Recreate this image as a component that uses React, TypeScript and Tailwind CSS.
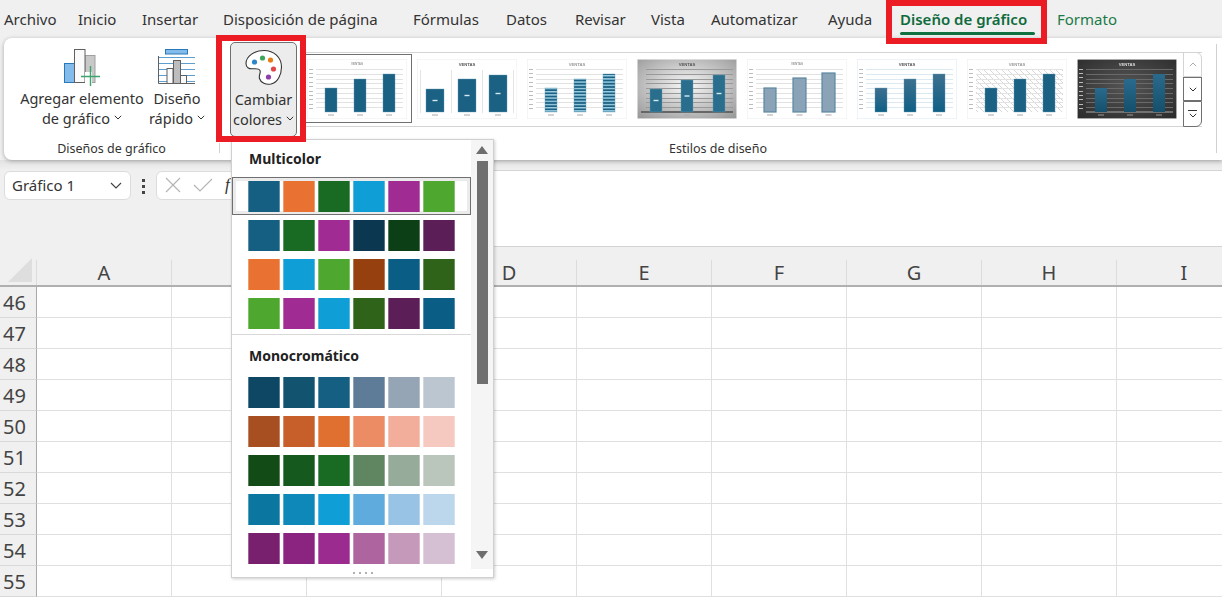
import React from "react";

const tabs: { label: string; cls: string }[] = [
  { label: "Archivo", cls: "w-[74px] text-[#333]" },
  { label: "Inicio", cls: "w-[64px] text-[#333]" },
  { label: "Insertar", cls: "w-[81px] text-[#333]" },
  { label: "Disposición de página", cls: "w-[190px] text-[#333]" },
  { label: "Fórmulas", cls: "w-[93px] text-[#333]" },
  { label: "Datos", cls: "w-[69px] text-[#333]" },
  { label: "Revisar", cls: "w-[76px] text-[#333]" },
  { label: "Vista", cls: "w-[60px] text-[#333]" },
  { label: "Automatizar", cls: "w-[117px] text-[#333]" },
  { label: "Ayuda", cls: "w-[72px] text-[#333]" },
  { label: "Diseño de gráfico", cls: "w-[157px] text-[#0f6b3c] font-semibold" },
  { label: "Formato", cls: "w-[100px] text-[#1c7a48]" },
];

const selectedRow = ["#156082", "#e97132", "#196b24", "#0f9ed5", "#a02b93", "#4ea72e"];
const multi = [
  ["#156082", "#196b24", "#a02b93", "#0c3750", "#0d3f16", "#5c1e57"],
  ["#e97132", "#0f9ed5", "#4ea72e", "#97400f", "#0a5e85", "#2f6319"],
  ["#4ea72e", "#a02b93", "#0f9ed5", "#2f6319", "#5c1e57", "#0a5e85"],
];
const mono = [
  ["#0d4763", "#125470", "#156082", "#5e7b97", "#96a5b5", "#bcc6d0"],
  ["#a84f21", "#c65f2a", "#e0702f", "#ec8c64", "#f2ae9b", "#f5c9c0"],
  ["#124b16", "#16591e", "#196b24", "#5f8661", "#97ab9a", "#bac6bb"],
  ["#0b76a0", "#0d88b9", "#0f9ed5", "#5fabdd", "#98c3e4", "#bcd6ec"],
  ["#781f6e", "#8b2480", "#9c2b8f", "#ae649f", "#c499ba", "#d5bfd3"],
];

const cols = ["A", "B", "C", "D", "E", "F", "G", "H", "I"];
const rows = [46, 47, 48, 49, 50, 51, 52, 53, 54, 55];

function Swatches({ colors }: { colors: string[] }) {
  return (
    <div className="flex gap-[3px]">
      {colors.map((c, i) => (
        <div key={i} className="w-[32px] h-[31px] border-x border-white/30" style={{ backgroundColor: c }} />
      ))}
    </div>
  );
}

function Chevron({ className = "" }: { className?: string }) {
  return (
    <svg viewBox="0 0 8 5" className={"w-[8px] h-[5px] " + className} fill="none" stroke="#333" strokeWidth="1">
      <path d="M0.8 0.8 L4 4 L7.2 0.8" />
    </svg>
  );
}

type Variant = "plain" | "wide" | "stripe" | "silver" | "soft" | "blue" | "hatch" | "dark";

function Thumb({ v }: { v: Variant }) {
  const wide = v === "wide" || v === "silver";
  const bars: [number, number, number][] =
    v === "wide"
      ? [[9, 18, 30], [41, 18, 20], [72, 18, 16]]
      : v === "silver"
      ? [[13, 12, 30], [44, 12, 21], [76, 12, 16]]
      : v === "soft"
      ? [[17, 12, 29], [46, 13, 19], [75, 13, 14]]
      : [[18, 12, 29], [47, 12, 20], [76, 12, 15]];
  const gridColor =
    v === "dark" ? "#6a6a6a" : v === "silver" ? "#999" : v === "blue" ? "#c3dbe9" : "#e2e2e2";
  const bg = v === "dark" ? "url(#g-dark)" : v === "silver" ? "url(#g-silver)" : "#fff";
  const fill =
    v === "blue"
      ? "url(#g-bar)"
      : v === "dark"
      ? "url(#g-darkbar)"
      : v === "soft"
      ? "#8ba3b6"
      : v === "silver"
      ? "#2a6e8e"
      : v === "stripe"
      ? "url(#p-stripe)"
      : "#1a6184";
  const titleColor = v === "dark" ? "#ddd" : v === "plain" || v === "soft" || v === "hatch" || v === "stripe" ? "#999" : "#555";
  return (
    <svg viewBox="0 0 100 60" className="w-[100px] h-[60px] block">
      <defs>
        <radialGradient id="g-silver" cx="50%" cy="45%" r="70%">
          <stop offset="0%" stopColor="#f8f8f8" />
          <stop offset="100%" stopColor="#9a9a9a" />
        </radialGradient>
        <radialGradient id="g-dark" cx="50%" cy="45%" r="75%">
          <stop offset="0%" stopColor="#555" />
          <stop offset="100%" stopColor="#2a2a2a" />
        </radialGradient>
        <linearGradient id="g-bar" x1="0" y1="0" x2="0" y2="1">
          <stop offset="0%" stopColor="#3d7090" />
          <stop offset="100%" stopColor="#0f5f85" />
        </linearGradient>
        <linearGradient id="g-darkbar" x1="0" y1="0" x2="0" y2="1">
          <stop offset="0%" stopColor="#2a6a8c" />
          <stop offset="100%" stopColor="#14506c" />
        </linearGradient>
        <pattern id="p-stripe" width="3" height="3.2" patternUnits="userSpaceOnUse">
          <rect width="3" height="3.2" fill="#1a6184" />
          <rect width="3" height="1.4" fill="#9fd0e4" />
        </pattern>
        <pattern id="p-hatch" width="6" height="6" patternUnits="userSpaceOnUse">
          <path d="M0 0 L6 6" stroke="#d8d8d8" strokeWidth="1" />
        </pattern>
      </defs>
      <rect x="0.25" y="0.25" width="99.5" height="59.5" fill={bg} stroke={v === "blue" ? "#dbe8f2" : "#ececec"} strokeWidth="0.5" />
      <text x="50" y={v === "plain" || v === "soft" ? 6 : 6.5} textAnchor="middle" fontSize={v === "plain" || v === "soft" ? 3 : 4.2} fontWeight="700" fill={titleColor} fontFamily="Liberation Sans, sans-serif">
        {v === "plain" || v === "soft" ? "VENTAS" : "VENTAS"}
      </text>
      {v === "hatch" && <rect x="9" y="10" width="87" height="43" fill="url(#p-hatch)" />}
      {!(v === "wide") &&
        [10, 15, 20, 24, 29, 34, 39, 43, 48].map((y) => (
          <rect key={y} x="9" y={y} width="87" height={v === "blue" ? 0.6 : 1} fill={gridColor} />
        ))}
      {v === "wide" &&
        [3, 34, 65, 96].map((x) => <rect key={x} x={x} y="11" width="1" height="43" fill="#e4e4e4" />)}
      {!wide &&
        [10, 14, 18, 23, 27, 32, 36, 40, 45, 49].map((y) => (
          <rect key={y} x="2" y={y} width="4" height="1" fill={v === "dark" ? "#bbb" : "#bbb"} />
        ))}
      {v === "silver" && <rect x="4" y="52" width="92" height="2" fill="#666" />}
      {v === "dark" && <rect x="9" y="52.5" width="87" height="1" fill="#aaa" />}
      {bars.map(([x, w, y]) => (
        <g key={x}>
          <rect
            x={x}
            y={y}
            width={w}
            height={53 - y}
            fill={fill}
            stroke={v === "soft" ? "#5a87a0" : v === "dark" ? "none" : "#6a9cb4"}
            strokeWidth={v === "soft" ? 1.2 : 0.4}
          />
          {wide && <rect x={x + w / 2 - 2.5} y={(y + 53) / 2 - 0.7} width="5" height="1.4" fill="#d8e8f0" />}
          <rect x={x + w / 2 - 3} y="55.5" width="6" height="1" fill={v === "dark" ? "#999" : "#aaa"} />
        </g>
      ))}
    </svg>
  );
}

function AddElementIcon() {
  return (
    <svg viewBox="0 0 38 38" className="w-[38px] h-[38px]">
      <rect x="1.5" y="15.5" width="10" height="19" fill="#83bcec" stroke="#2b78b8" />
      <rect x="22" y="7.5" width="10" height="27" fill="#c8c8c8" stroke="#a0a0a0" />
      <rect x="11.5" y="1.5" width="10.5" height="33" fill="#fafafa" stroke="#606060" />
      <rect x="22" y="24" width="7" height="11" fill="#fff" />
      <path d="M18 28.5 H37 M27.5 18 V38" stroke="#3fa36c" strokeWidth="1.4" fill="none" />
    </svg>
  );
}

function QuickLayoutIcon() {
  return (
    <svg viewBox="0 0 38 38" className="w-[38px] h-[38px]">
      <rect x="7.5" y="1.5" width="22" height="4.5" fill="#83bcec" stroke="#2b78b8" />
      <path d="M1 9.5 H37 M1 15.5 H37 M1 21.5 H37 M1 27.5 H37 M1 33.5 H37" stroke="#5e9fcf" strokeWidth="1" />
      <path d="M0.5 8 V35.5 H37" stroke="#606060" strokeWidth="1" fill="none" />
      <rect x="9" y="20.5" width="6" height="15" fill="#fafafa" stroke="#606060" />
      <rect x="15.5" y="12.5" width="7" height="23" fill="#bdbdbd" stroke="#606060" />
      <rect x="22.5" y="27.5" width="6" height="8" fill="#fafafa" stroke="#606060" />
    </svg>
  );
}

function PaletteIcon() {
  return (
    <svg viewBox="0 0 38 38" className="w-[38px] h-[38px]">
      <path
        d="M19 1.5 C9 1.5 1 7.5 1 14.5 C1 18.5 4 20 7.5 19.8 C11 19.6 14 19.2 15 21.5 C16 24 13.5 26 14.5 29.5 C15.8 34 21 36 26 35 C32.5 33.5 36.5 26 36.5 18 C36.5 8.5 29 1.5 19 1.5 Z"
        fill="#fff"
        stroke="#333"
        strokeWidth="1.1"
      />
      <circle cx="9.5" cy="13" r="2.6" fill="#2e86c8" />
      <circle cx="17.5" cy="9" r="2.6" fill="#3fa55b" />
      <circle cx="25.5" cy="11" r="2.6" fill="#e67e17" />
      <circle cx="28.5" cy="20" r="2.6" fill="#e04848" />
      <circle cx="23.5" cy="28" r="2.6" fill="#8e3fa8" />
    </svg>
  );
}

export default function App() {
  return (
    <div
      className="relative w-[1222px] h-[597px] overflow-hidden bg-[#f0f0f0] flex flex-col text-[#333]"
      style={{ fontFamily: '"Noto Sans", "Open Sans", sans-serif' }}
    >
      {/* Tabs */}
      <div className="h-[38px] pl-[4px] flex items-center text-[15px] whitespace-nowrap">
        {tabs.map((t) => (
          <div key={t.label} className={"relative shrink-0 " + t.cls}>
            {t.label}
            {t.label === "Diseño de gráfico" && (
              <div className="absolute left-0 top-[24px] w-[135px] h-[3px] rounded-sm bg-[#107040]" />
            )}
          </div>
        ))}
      </div>

      {/* Ribbon */}
      <div className="relative z-10 h-[123px] ml-[4px] flex bg-white rounded-l-lg shadow-[0_1px_4px_rgba(0,0,0,0.3)]">
        <div className="w-[215px] shrink-0 flex flex-col">
          <div className="flex pl-[16px] pt-[10px] h-[101px]">
            <div className="w-[124px] flex flex-col items-center">
              <AddElementIcon />
              <div className="mt-[2px] text-[14.5px] leading-[20px] text-center whitespace-nowrap">
                Agregar elemento
                <div className="flex items-center justify-center gap-[4px]">
                  de gráfico <Chevron />
                </div>
              </div>
            </div>
            <div className="w-[66px] flex flex-col items-center">
              <QuickLayoutIcon />
              <div className="mt-[2px] text-[14.5px] leading-[20px] text-center whitespace-nowrap">
                Diseño
                <div className="flex items-center justify-center gap-[4px]">
                  rápido <Chevron />
                </div>
              </div>
            </div>
          </div>
          <div className="text-[12.5px] leading-[20px] text-center">Diseños de gráfico</div>
        </div>
        <div className="w-px h-[10px] mt-[105px] bg-[#d0d0d0] shrink-0" />
        <div className="w-[996px] shrink-0 flex flex-col">
          <div className="flex items-start h-[101px] pt-[4px]">
            <div className="ml-[10px] w-[67px] h-[95px] shrink-0 flex flex-col items-center pt-[6px] bg-[#ececec] border border-[#707070] rounded-[5px]">
              <PaletteIcon />
              <div className="mt-[2px] text-[14.5px] leading-[20px] text-center whitespace-nowrap">
                Cambiar
                <div className="flex items-center justify-center gap-[4px]">
                  colores <Chevron />
                </div>
              </div>
            </div>
            <div className="ml-[3px] mt-[10px] w-[902px] h-[75px] shrink-0 flex border-y border-[#d4d4d4]">
              <div className="w-[883px] pl-[7px] pt-[6px] flex gap-[10px]">
                {(["plain", "wide", "stripe", "silver", "soft", "blue", "hatch", "dark"] as Variant[]).map((v, i) => (
                  <div key={v} className="relative w-[100px] h-[60px] shrink-0 blur-[0.35px]">
                    <Thumb v={v} />
                  </div>
                ))}
              </div>
              <div className="w-[19px] -my-px flex flex-col">
                <div className="h-[26px] flex items-center justify-center border border-[#d4d4d4] rounded-tr-md">
                  <Chevron className="rotate-180 opacity-40" />
                </div>
                <div className="h-[24px] flex items-center justify-center border border-[#707070]">
                  <Chevron />
                </div>
                <div className="h-[26px] flex flex-col items-center justify-center gap-[2px] border border-[#707070] rounded-br-md">
                  <div className="w-[9px] h-px bg-[#333]" />
                  <Chevron />
                </div>
              </div>
            </div>
          </div>
          <div className="text-[12.5px] leading-[20px] text-center">Estilos de diseño</div>
        </div>
        <div className="w-px h-[109px] mt-[6px] bg-[#d0d0d0] shrink-0" />
      </div>

      {/* Selected style frame, above the first thumbnail */}
      <div className="absolute z-10 left-[302px] top-[54px] w-[110px] h-[69px] border border-[#707070] pointer-events-none" />

      {/* Formula bar */}
      <div className="h-[101px] flex items-start pt-[10px] bg-gradient-to-b from-[#e2e2e2] to-[#f0f0f0] to-[10%]">
        <div className="ml-[4px] mt-[1px] w-[127px] h-[29px] shrink-0 flex items-center justify-between pl-[7px] pr-[8px] bg-white border border-[#dcdcdc] rounded-md text-[15px]">
          Gráfico 1
          <svg viewBox="0 0 12 7" className="w-[12px] h-[7px]" fill="none" stroke="#444" strokeWidth="1.2">
            <path d="M1 1 L6 6 L11 1" />
          </svg>
        </div>
        <div className="ml-[11px] mt-[9px] w-[3px] flex flex-col gap-[3px] shrink-0">
          <div className="h-[3px] bg-[#444]" />
          <div className="h-[3px] bg-[#444]" />
          <div className="h-[3px] bg-[#444]" />
        </div>
        <div className="ml-[11px] mt-[1px] w-[150px] h-[29px] shrink-0 flex items-center gap-[13px] pl-[8px] bg-white border border-[#dcdcdc] rounded-l-md">
          <svg viewBox="0 0 16 16" className="w-[16px] h-[16px]" fill="none" stroke="#b5b5b5" strokeWidth="1.2">
            <path d="M1 1 L15 15 M15 1 L1 15" />
          </svg>
          <svg viewBox="0 0 20 16" className="w-[20px] h-[16px] -ml-[1px]" fill="none" stroke="#b5b5b5" strokeWidth="1.2">
            <path d="M1 8 L7 14 L19 2" />
          </svg>
          <span className="italic text-[17px] -ml-[1px]" style={{ fontFamily: '"Liberation Serif", serif' }}>
            f
          </span>
        </div>
        <div className="flex-1 h-[77px] bg-white border-y border-[#d4d4d4]" />
      </div>

      {/* Column headers */}
      <div className="h-[27px] shrink-0 flex border-b-2 border-[#b0b0b0]">
        <div className="w-[37px] shrink-0 flex items-end justify-end pr-[4px] pb-[3px] border-r border-[#dcdcdc]">
          <svg viewBox="0 0 24 24" className="w-[24px] h-[24px]">
            <path d="M24 0 V24 H0 Z" fill="#dedede" />
          </svg>
        </div>
        {cols.map((c) => (
          <div key={c} className="w-[135px] shrink-0 flex items-center justify-center text-[20px] text-[#444] border-r border-[#dcdcdc]">
            {c}
          </div>
        ))}
      </div>

      {/* Sheet */}
      <div className="flex flex-col">
        {rows.map((r) => (
          <div key={r} className="h-[31px] shrink-0 flex">
            <div className="w-[37px] shrink-0 pl-[3px] pt-[1px] text-[20px] leading-[29px] text-[#444] bg-[#f0f0f0] border-b border-[#d8d8d8] border-r border-r-[#a8a8a8]">
              {r}
            </div>
            {cols.map((c) => (
              <div key={c} className="w-[135px] shrink-0 bg-white border-r border-b border-[#e0e0e0]" />
            ))}
          </div>
        ))}
      </div>

      {/* Colour menu */}
      <div className="absolute z-20 left-[231px] top-[139px] w-[263px] h-[439px] flex flex-col bg-white border border-[#d0d0d0] shadow-[1px_1px_3px_rgba(0,0,0,0.2)]">
        <div className="h-[429px] flex shrink-0">
          <div className="w-[239px] shrink-0 overflow-hidden">
            <div className="h-[37px] pl-[17px] flex items-center text-[14px] font-bold text-[#222]">Multicolor</div>
            <div className="h-[38px] border border-[#707070]">
              <div className="h-[36px] border-[3px] border-[#ebebeb] bg-white pl-[12px]">
                <Swatches colors={selectedRow} />
              </div>
            </div>
            <div className="mt-[5px] pl-[16px] flex flex-col gap-[8px]">
              {multi.map((m, i) => (
                <Swatches key={i} colors={m} />
              ))}
            </div>
            <div className="mt-[5px] h-px bg-[#d8d8d8]" />
            <div className="h-[40px] mb-[2px] pl-[17px] flex items-center text-[14px] font-bold text-[#222]">
              Monocromático
            </div>
            <div className="pl-[16px] flex flex-col gap-[8px]">
              {mono.map((m, i) => (
                <Swatches key={i} colors={m} />
              ))}
            </div>
          </div>
          <div className="flex-1 bg-[#f5f5f5] flex flex-col items-center pt-[6px]">
            <div className="w-0 h-0 border-x-[6px] border-x-transparent border-b-[8px] border-b-[#6e6e6e]" />
            <div className="mt-[7px] w-[11px] h-[223px] bg-[#707070]" />
            <div className="mt-[167px] w-0 h-0 border-x-[6px] border-x-transparent border-t-[8px] border-t-[#6e6e6e]" />
          </div>
        </div>
        <div className="flex-1 flex items-center justify-center gap-[4px]">
          <div className="w-[2px] h-[2px] bg-[#b0b0b0]" />
          <div className="w-[2px] h-[2px] bg-[#b0b0b0]" />
          <div className="w-[2px] h-[2px] bg-[#b0b0b0]" />
          <div className="w-[2px] h-[2px] bg-[#b0b0b0]" />
        </div>
      </div>

      {/* Red annotation boxes */}
      <div className="absolute z-30 left-[216px] top-[35px] w-[90px] h-[107px] border-[6px] border-[#ec1c24] pointer-events-none" />
      <div className="absolute z-30 left-[886px] top-[0px] w-[161px] h-[44px] border-[6px] border-[#ec1c24] pointer-events-none" />
    </div>
  );
}
